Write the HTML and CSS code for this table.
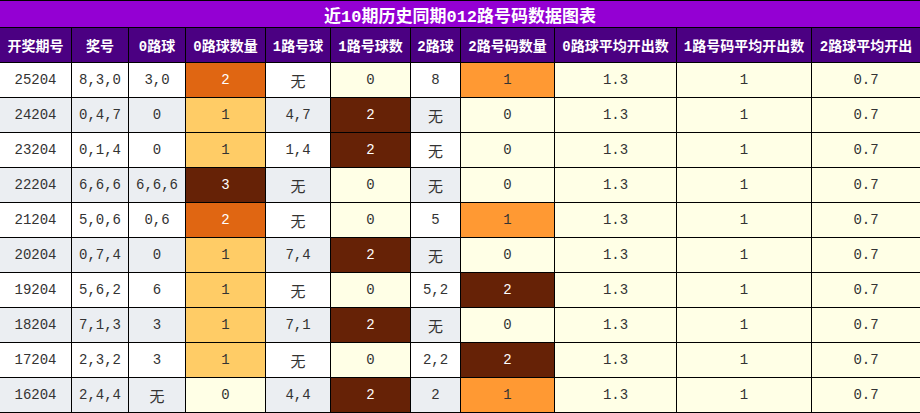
FILE: index.html
```html
<!DOCTYPE html>
<html lang="zh">
<head>
<meta charset="utf-8">
<link rel="stylesheet" href="styles.css">
</head>
<body>
<table class="chart">
  <colgroup>
    <col class="c1"><col class="c2"><col class="c3"><col class="c4"><col class="c5"><col class="c6"><col class="c7"><col class="c8"><col class="c9"><col class="c10"><col class="c11">
  </colgroup>
  <thead>
    <tr class="title-row"><th colspan="11">近10期历史同期012路号码数据图表</th></tr>
    <tr class="head-row">
      <th>开奖期号</th><th>奖号</th><th>0路球</th><th>0路球数量</th><th>1路号球</th><th>1路号球数</th><th>2路球</th><th>2路号码数量</th><th>0路球平均开出数</th><th>1路号码平均开出数</th><th>2路球平均开出</th>
    </tr>
  </thead>
  <tbody>
    <tr class="odd"><td>25204</td><td>8,3,0</td><td>3,0</td><td class="dorange">2</td><td class="cjk">无</td><td class="cream">0</td><td>8</td><td class="orange">1</td><td class="cream">1.3</td><td class="cream">1</td><td class="cream">0.7</td></tr>
    <tr class="even"><td>24204</td><td>0,4,7</td><td>0</td><td class="lorange">1</td><td>4,7</td><td class="brown">2</td><td class="cjk">无</td><td class="cream">0</td><td class="cream">1.3</td><td class="cream">1</td><td class="cream">0.7</td></tr>
    <tr class="odd"><td>23204</td><td>0,1,4</td><td>0</td><td class="lorange">1</td><td>1,4</td><td class="brown">2</td><td class="cjk">无</td><td class="cream">0</td><td class="cream">1.3</td><td class="cream">1</td><td class="cream">0.7</td></tr>
    <tr class="even"><td>22204</td><td>6,6,6</td><td>6,6,6</td><td class="brown">3</td><td class="cjk">无</td><td class="cream">0</td><td class="cjk">无</td><td class="cream">0</td><td class="cream">1.3</td><td class="cream">1</td><td class="cream">0.7</td></tr>
    <tr class="odd"><td>21204</td><td>5,0,6</td><td>0,6</td><td class="dorange">2</td><td class="cjk">无</td><td class="cream">0</td><td>5</td><td class="orange">1</td><td class="cream">1.3</td><td class="cream">1</td><td class="cream">0.7</td></tr>
    <tr class="even"><td>20204</td><td>0,7,4</td><td>0</td><td class="lorange">1</td><td>7,4</td><td class="brown">2</td><td class="cjk">无</td><td class="cream">0</td><td class="cream">1.3</td><td class="cream">1</td><td class="cream">0.7</td></tr>
    <tr class="odd"><td>19204</td><td>5,6,2</td><td>6</td><td class="lorange">1</td><td class="cjk">无</td><td class="cream">0</td><td>5,2</td><td class="brown">2</td><td class="cream">1.3</td><td class="cream">1</td><td class="cream">0.7</td></tr>
    <tr class="even"><td>18204</td><td>7,1,3</td><td>3</td><td class="lorange">1</td><td>7,1</td><td class="brown">2</td><td class="cjk">无</td><td class="cream">0</td><td class="cream">1.3</td><td class="cream">1</td><td class="cream">0.7</td></tr>
    <tr class="odd"><td>17204</td><td>2,3,2</td><td>3</td><td class="lorange">1</td><td class="cjk">无</td><td class="cream">0</td><td>2,2</td><td class="brown">2</td><td class="cream">1.3</td><td class="cream">1</td><td class="cream">0.7</td></tr>
    <tr class="even"><td>16204</td><td>2,4,4</td><td class="cjk">无</td><td class="cream">0</td><td>4,4</td><td class="brown">2</td><td>2</td><td class="orange">1</td><td class="cream">1.3</td><td class="cream">1</td><td class="cream">0.7</td></tr>
  </tbody>
</table>
</body>
</html>
```

FILE: styles.css
```css
html, body {
  margin: 0;
  padding: 0;
  background: #ffffff;
}

.chart {
  border-collapse: collapse;
  table-layout: fixed;
  width: 921px;
  margin-left: -1px;
  font-family: "Liberation Mono", "Noto Sans CJK SC", monospace;
  font-size: 14px;
  color: #333333;
}

.c1 { width: 72px; }
.c2 { width: 57px; }
.c3 { width: 57px; }
.c4 { width: 80px; }
.c5 { width: 65px; }
.c6 { width: 80px; }
.c7 { width: 50px; }
.c8 { width: 94px; }
.c9 { width: 122px; }
.c10 { width: 135px; }
.c11 { width: 109px; }

.chart th,
.chart td {
  border: 1px solid #000000;
  padding: 0;
  text-align: center;
  white-space: nowrap;
  overflow: hidden;
}

.title-row th {
  height: 26px;
  background: #9400d3;
  color: #ffffff;
  font-family: "Liberation Mono", "Noto Sans CJK SC", monospace;
  font-size: 17px;
  font-weight: bold;
}

.head-row th {
  height: 34px;
  background: #4b0082;
  color: #ffffff;
  font-size: 14px;
  font-weight: bold;
}

.chart td {
  height: 34px;
}

.odd td { background: #ffffff; }
.even td { background: #ebeef2; }

.chart td.cjk {
  font-family: "Noto Sans CJK SC", sans-serif;
  font-size: 15px;
}

.chart td.cream { background: #ffffe6; }
.chart td.dorange { background: #e06612; color: #ffffff; }
.chart td.lorange { background: #ffcc66; }
.chart td.orange { background: #ff9933; }
.chart td.brown { background: #662206; color: #ffffff; }
```
